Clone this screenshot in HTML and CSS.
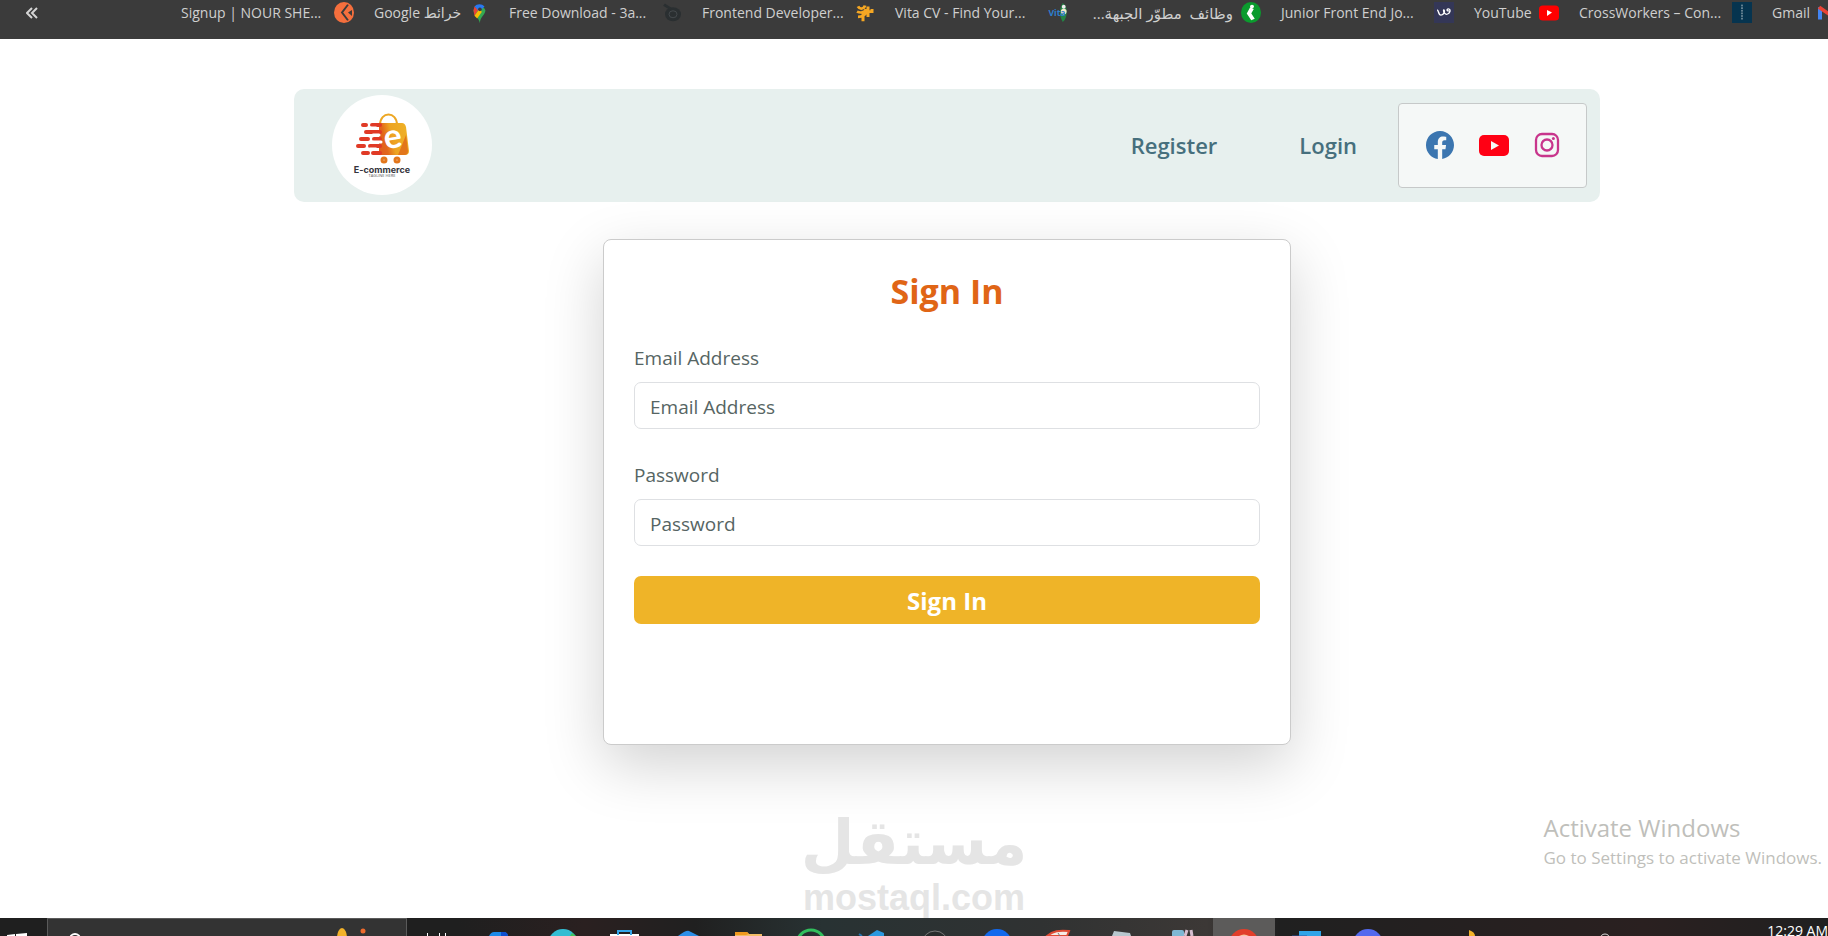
FILE: index.html
```html
<!DOCTYPE html>
<html lang="en">
<head>
    <meta charset="UTF-8">
    <meta name="viewport" content="width=device-width, initial-scale=1.0">
    <title>Sign In</title>
    <link rel="stylesheet" href="styles.css">
</head>
<body>

    <!-- Bookmarks -->
    <nav class="bookmarks" aria-label="Bookmarks">
        <button class="more" aria-label="More bookmarks">
            <svg width="12" height="12" viewBox="0 0 12 12"><path d="M6 1L1 6l5 5M11 1L6 6l5 5" fill="none" stroke="#d4d4d4" stroke-width="2"/></svg>
        </button>
        <a class="bookmark" href="#"><span>Signup | NOUR SHE...</span>
            <svg width="20" height="21" viewBox="0 0 20 24" preserveAspectRatio="none"><ellipse cx="10" cy="12" rx="10" ry="12" fill="#f56f3d"/><path d="M14 3L8 12l6 9" fill="none" stroke="#3b3b3b" stroke-width="2"/><path d="M18 9l-4 3 4 4z" fill="#3b3b3b"/></svg>
        </a>
        <a class="bookmark google" href="#"><span>Google خرائط</span>
            <svg width="20" height="22" viewBox="0 0 20 24"><path d="M4 9a7 7 0 0 1 13 0c0 5-6 7-6 14C10 17 4 14 4 9z" fill="#34a853"/><path d="M5 5a7 7 0 0 1 11 0l-6 6z" fill="#2879f3"/><path d="M4 9l1-4 4 4-4 6z" fill="#ea4335"/><path d="M5 15l6-8 2 4-5 7z" fill="#fbbc04"/><circle cx="11" cy="8" r="2" fill="#3b3b3b"/></svg>
        </a>
        <a class="bookmark" href="#"><span>Free Download - 3a...</span>
            <svg width="20" height="21" viewBox="0 0 20 24" preserveAspectRatio="none"><circle cx="11" cy="14" r="8" fill="#2a2f31"/><circle cx="11" cy="14" r="4" fill="none" stroke="#454b4e"/><path d="M2 3l7 5" stroke="#2a2f31" stroke-width="3"/></svg>
        </a>
        <a class="bookmark" href="#"><span>Frontend Developer...</span>
            <svg width="20" height="21" viewBox="0 0 20 24" preserveAspectRatio="none"><path d="M3 5c2 4 6 3 7-1M2 11c4 2 8 1 9-3M3 17c4 0 7-2 8-6M8 10v12M13 5v12M10 11h7V8" fill="none" stroke="#f5a723" stroke-width="3"/></svg>
        </a>
        <a class="bookmark" href="#"><span>Vita CV - Find Your...</span>
            <svg width="20" height="21" viewBox="0 1 20 22"><path d="M15 2c6 4 5 16 0 20-4-7-4-13 0-20z" fill="#248546"/><circle cx="16" cy="11" r="3" fill="#f3e9c9"/><circle cx="16" cy="6" r="2" fill="#eee"/><text x="0" y="16" class="vita">Vita</text></svg>
        </a>
        <a class="bookmark arabic" href="#"><span dir="rtl">وظائف&nbsp; مطوّر الجبهة...</span>
            <svg width="20" height="21" viewBox="0 0 20 24" preserveAspectRatio="none"><ellipse cx="10" cy="12" rx="10" ry="12" fill="#0b9b2e"/><circle cx="11" cy="5" r="2" fill="#fff"/><path d="M11 7l-3 6 4 7" fill="none" stroke="#fff" stroke-width="4"/></svg>
        </a>
        <a class="bookmark" href="#"><span>Junior Front End Jo...</span>
            <svg width="20" height="21" viewBox="0 0 20 24" preserveAspectRatio="none"><path d="M0 0h20v24H0z" fill="#343757"/><path d="M3 9c2 0 1 6 4 6s4-5 3-6 0 6 3 5 4-5 2-6-3 3 0 2" fill="none" stroke="#fff" stroke-width="1.5"/></svg>
        </a>
        <a class="bookmark youtube" href="#"><span>YouTube</span>
            <svg width="20" height="21" viewBox="0 0 20 24" preserveAspectRatio="none"><rect y="4" width="20" height="17" rx="4" fill="#f00"/><path d="M8 9l5 3-5 4z" fill="#fff"/></svg>
        </a>
        <a class="bookmark" href="#"><span>CrossWorkers – Con...</span>
            <svg width="20" height="21" viewBox="0 0 20 24" preserveAspectRatio="none"><path d="M0 0h20v24H0z" fill="#06344f"/><path d="M10 3v18" stroke="#cbd5da" stroke-dasharray="2 1"/></svg>
        </a>
        <a class="bookmark gmail" href="#"><span>Gmail</span>
            <svg width="20" height="21" viewBox="0 0 20 24" preserveAspectRatio="none"><path d="M2 20V6" stroke="#4285f4" stroke-width="4"/><path d="M1 6l9 7 9-7" fill="none" stroke="#ea4335" stroke-width="4"/><path d="M18 20V6" stroke="#34a853" stroke-width="4"/></svg>
        </a>
    </nav>

    <!-- Page -->
    <div class="page">
        <header class="navbar">
            <a class="logo" href="#" aria-label="E-commerce">
                <svg width="100" height="100" viewBox="0 0 100 100">
                    <defs>
                        <linearGradient id="bag" x1="0" y1="0.2" x2="1" y2="0">
                            <stop offset="0" stop-color="#e2561f"/>
                            <stop offset="0.3" stop-color="#e2661a"/>
                            <stop offset="0.5" stop-color="#eda321"/>
                            <stop offset="1" stop-color="#efb428"/>
                        </linearGradient>
                    </defs>
                    <circle cx="50" cy="50" r="50" fill="#fff"/>
                    <path d="M48 30c0-14 17-14 17 0" fill="none" stroke="#eda724" stroke-width="2"/>
                    <path d="M38 28h32q3 0 4 4l3 24q0 4-4 4H47V28z" fill="url(#bag)"/>
                    <path d="M74 40l2 16q0 4-4 4h-6z" fill="#e2761b"/>
                    <g stroke="#e03a26" stroke-width="4" stroke-linecap="round">
                        <path d="M31 30h3M40 30h8M34 37h14M29 44h7M42 44h6M26 51h6M38 51h10M31 58h5M41 58h7"/>
                    </g>
                    <path d="M38 33h6M41 40h6M41 47h8M38 54h6" stroke="#fff" stroke-width="3" stroke-linecap="round"/>
                    <text x="61" y="53" class="logo-letter" transform="rotate(-10 61 45)">e</text>
                    <g fill="#fff" stroke="#e2761b" stroke-width="3"><circle cx="52" cy="65" r="2"/><circle cx="65" cy="65" r="2"/></g>
                    <text x="50" y="78" class="logo-name">E-commerce</text>
                    <text x="50" y="82" class="logo-tag">TAGLINE HERE</text>
                </svg>
            </a>
            <nav class="links">
                <a href="#">Register</a>
                <a href="#">Login</a>
            </nav>
            <div class="social">
                <a href="#" aria-label="Facebook"><svg width="28" height="28" viewBox="0 0 16 16" fill="#3b76b0"><path d="M16 8.049c0-4.446-3.582-8.05-8-8.05C3.58 0-.002 3.603-.002 8.05c0 4.017 2.926 7.347 6.75 7.951v-5.625h-2.03V8.05H6.75V6.275c0-2.017 1.195-3.131 3.022-3.131.876 0 1.791.157 1.791.157v1.98h-1.009c-.993 0-1.303.621-1.303 1.258v1.51h2.218l-.354 2.326H9.25V16c3.824-.604 6.75-3.934 6.75-7.951"/></svg></a>
                <a href="#" aria-label="YouTube"><svg width="30" height="22" viewBox="0 0 30 22"><rect y="1" width="30" height="21" rx="5" fill="#ff0014"/><path d="M12 7l8 4.500-8 4.500z" fill="#f5f8f7"/></svg></a>
                <a href="#" aria-label="Instagram"><svg width="26" height="26" viewBox="0 0 26 26"><rect x="2" y="2" width="22" height="22" rx="6" fill="none" stroke="#c8358c" stroke-width="2.300"/><circle cx="13" cy="13" r="5.500" fill="none" stroke="#c8358c" stroke-width="2.300"/><circle cx="19.400" cy="6.600" r="1.500" fill="#c8358c"/></svg></a>
            </div>
        </header>

        <main class="card">
            <h1>Sign In</h1>
            <form>
                <label for="email">Email Address</label>
                <input type="email" id="email" placeholder="Email Address">
                <label for="password">Password</label>
                <input type="password" id="password" placeholder="Password">
                <button type="submit" class="submit">Sign In</button>
            </form>
        </main>
    </div>

    <div class="watermark">
        <span class="watermark-ar" lang="ar">مستقل</span>
        <span>mostaql.com</span>
    </div>

    <div class="activate">
        <span class="activate-title">Activate Windows</span>
        <span>Go to Settings to activate Windows.</span>
    </div>

    <!-- Taskbar -->
    <footer class="taskbar">
        <button class="start" aria-label="Start"><svg width="47" height="18" viewBox="0 0 47 18"><path d="M7 17l8-1v2H7zM16 16l11-1v3H16z" fill="#fff"/></svg></button>
        <div class="search">
            <svg width="24" height="18" viewBox="0 0 24 18"><circle cx="12" cy="21" r="5" fill="none" stroke="#fff" stroke-width="2"/></svg>
            <svg width="40" height="18" viewBox="0 0 40 18"><ellipse cx="10" cy="20" rx="5" ry="10" fill="#f3b229"/><circle cx="31" cy="13" r="2.500" fill="#ee6a2c"/></svg>
        </div>
        <button class="app" aria-label="Task view"><svg width="36" height="18" viewBox="0 0 36 18"><path d="M7.500 15v3M19.500 15v3M25.500 15v3" stroke="#fff"/></svg></button>
        <button class="app" aria-label="Copilot"><svg width="36" height="18" viewBox="0 0 36 18"><path d="M7 18q2-4 5-4h10q3 0 4 4z" fill="#1d8ae8"/><path d="M19 14h4q3 1 3 4h-7z" fill="#0f4fd0"/></svg></button>
        <button class="app" aria-label="Edge"><svg width="36" height="18" viewBox="0 0 36 18"><circle cx="19" cy="26" r="15" fill="#33bdd2"/><path d="M28 15l4 3h-6z" fill="#3fc75a"/></svg></button>
        <button class="app" aria-label="Store"><svg width="36" height="18" viewBox="0 0 36 18"><path d="M4 16h29v2H4z" fill="#fff"/><path d="M12 17v-4h13v4" fill="none" stroke="#35a6ea" stroke-width="2"/></svg></button>
        <button class="app" aria-label="Mail"><svg width="36" height="18" viewBox="0 0 36 18"><path d="M10 18q8-6 11-5l10 5z" fill="#2d8fe8"/></svg></button>
        <button class="app" aria-label="Files"><svg width="36" height="18" viewBox="0 0 36 18"><path d="M5 14h12l2 2h13v2H5z" fill="#f2bd67"/><path d="M5 14h12l2 2-3 1H5z" fill="#ef991d"/></svg></button>
        <button class="app" aria-label="WhatsApp"><svg width="36" height="18" viewBox="0 0 36 18"><circle cx="19" cy="26" r="14" fill="none" stroke="#31bf5d" stroke-width="3"/></svg></button>
        <button class="app" aria-label="Code"><svg width="36" height="18" viewBox="0 0 36 18"><path d="M14 18l9-6 7 3v3z" fill="#2b98df"/><path d="M5 16l3 2" stroke="#2472ad" stroke-width="2"/></svg></button>
        <button class="app" aria-label="Browser"><svg width="36" height="18" viewBox="0 0 36 18"><circle cx="19" cy="26" r="13" fill="#292c2c" stroke="#777"/></svg></button>
        <button class="app" aria-label="Messages"><svg width="36" height="18" viewBox="0 0 36 18"><circle cx="19" cy="26" r="15" fill="#1269ed"/></svg></button>
        <button class="app" aria-label="Clock"><svg width="36" height="18" viewBox="0 0 36 18"><path d="M7 18c6-5 12-6 22-5l-2 5z" fill="#f5ebe5" stroke="#df4c35" stroke-width="2"/><path d="M18 15l2 3" stroke="#777"/></svg></button>
        <button class="app" aria-label="Notes"><svg width="36" height="18" viewBox="0 0 36 18"><path d="M12 13l16 2 1 3H10z" fill="#b8c7ce"/></svg></button>
        <button class="app" aria-label="Tools"><svg width="36" height="18" viewBox="0 0 36 18"><rect x="8" y="12" width="12" height="8" rx="2" fill="#7fb8d4"/><path d="M23 12l-2 6M27 12l1 6" stroke="#d7bed0" stroke-width="3"/></svg></button>
        <button class="app active" aria-label="Chrome"><svg width="36" height="18" viewBox="0 0 36 18"><circle cx="18" cy="26" r="15" fill="#e23e2a"/><path d="M13 18q5-3 10 0z" fill="#f5c7a2"/></svg></button>
        <button class="app" aria-label="Photos"><svg width="36" height="18" viewBox="0 0 36 18"><path d="M11 13h22v5H11z" fill="#2fa4e8"/><path d="M4 18h15" stroke="#3156a2" stroke-width="1"/></svg></button>
        <button class="app" aria-label="Discord"><svg width="36" height="18" viewBox="0 0 36 18"><circle cx="18" cy="26" r="15" fill="#5369ee"/></svg></button>
        <div class="tray">
            <svg width="18" height="18" viewBox="0 0 18 18"><path d="M8 12q6 2 6 6H8z" fill="#f3b229"/></svg>
            <svg width="18" height="18" viewBox="0 0 18 18"><circle cx="9" cy="21" r="5" fill="none" stroke="#ddd"/></svg>
            <span class="time">12:29 AM</span>
        </div>
    </footer>

</body>
</html>
```

FILE: styles.css
```css
* {
    box-sizing: border-box;
}
body {
    font-family: "Open Sans", "Noto Sans", "DejaVu Sans", sans-serif;
    margin: 0;
    height: 100vh;
    display: flex;
    flex-direction: column;
    overflow: hidden;
    background: white;
    color: #566563;
    position: relative;
}
a {
    text-decoration: none;
}
button {
    border: none;
    padding: 0;
    background: none;
    font-family: inherit;
    cursor: pointer;
}
svg {
    display: block;
    flex-shrink: 0;
}

/* Bookmarks */
.bookmarks {
    flex-shrink: 0;
    display: flex;
    gap: 20px;
    height: 39px;
    padding-left: 26px;
    background: #3b3b3b;
    overflow: hidden;
}
.more {
    flex-shrink: 0;
    width: 135px;
    height: 26px;
}
.bookmark {
    flex-shrink: 0;
    display: flex;
    justify-content: space-between;
    align-items: center;
    width: 173px;
    height: 25px;
    font-size: 14px;
    color: #cfcfcf;
    white-space: nowrap;
}
.google {
    width: 115px;
}
.youtube {
    width: 85px;
}
.gmail {
    width: 66px;
}
.arabic {
    justify-content: flex-end;
    gap: 8px;
    font-size: 15px;
}
.vita {
    font-size: 9px;
    font-weight: bold;
    fill: #2d7fd0;
}

/* Navbar */
.page {
    flex: 1;
    min-height: 0;
    padding: 50px 0 0 66px;
}
.navbar {
    display: flex;
    align-items: center;
    max-width: 1306px;
    margin: 0 auto 37px;
    padding: 6px 13px 7px 38px;
    border-radius: 10px;
    background: #e7f0ee;
}
.links {
    display: flex;
    gap: 82px;
    margin-left: auto;
    margin-right: 41px;
}
.links a {
    font-size: 22px;
    font-weight: 600;
    color: #466f7d;
}
.social {
    display: flex;
    align-items: center;
    justify-content: center;
    gap: 25px;
    width: 189px;
    height: 85px;
    border: 1px solid #c6c9c9;
    border-radius: 4px;
    background: #f5f8f7;
}
.logo-letter {
    font-family: Lato, sans-serif;
    font-size: 34px;
    font-weight: bold;
    text-anchor: middle;
    fill: white;
}
.logo-name {
    font-family: Inter, sans-serif;
    font-size: 9px;
    font-weight: bold;
    text-anchor: middle;
    fill: #34343c;
}
.logo-tag {
    font-size: 4px;
    text-anchor: middle;
    fill: #555;
}

/* Sign in card */
.card {
    max-width: 688px;
    min-height: 506px;
    margin: 0 auto;
    padding: 28px 30px;
    border: 1px solid #cbcbcb;
    border-radius: 8px;
    background: white;
    box-shadow: 0 20px 60px rgba(0, 0, 0, 0.18);
}
.card h1 {
    margin: 0 0 30px;
    font-size: 34px;
    line-height: 46px;
    font-weight: bold;
    text-align: center;
    color: #e06516;
}
.card label {
    display: block;
    margin-bottom: 10px;
    font-size: 19px;
    line-height: 28px;
}
.card input {
    display: block;
    width: 100%;
    height: 47px;
    margin-bottom: 32px;
    padding: 2px 15px 0;
    border: 1px solid #dee0e3;
    border-radius: 7px;
    font-family: inherit;
    font-size: 19px;
    color: #566563;
}
.card input::placeholder {
    color: #566563;
    opacity: 1;
}
.card #password {
    margin-bottom: 30px;
}
.submit {
    display: block;
    width: 100%;
    height: 48px;
    border-radius: 7px;
    background: #efb428;
    font-size: 24px;
    font-weight: bold;
    color: white;
}

/* Overlays */
.watermark {
    position: absolute;
    left: 0;
    right: 0;
    bottom: 18px;
    display: flex;
    flex-direction: column;
    align-items: center;
    font-family: "Liberation Sans", sans-serif;
    font-size: 36px;
    line-height: 41px;
    font-weight: bold;
    color: #e5e5e5;
    pointer-events: none;
}
.watermark-ar {
    font-family: "DejaVu Sans", sans-serif;
    font-size: 62px;
    line-height: 68px;
}
.activate {
    position: absolute;
    right: 6px;
    bottom: 66px;
    display: flex;
    flex-direction: column;
    font-size: 17px;
    line-height: 24px;
    color: #bfbfbb;
    pointer-events: none;
}
.activate-title {
    font-size: 24px;
    line-height: 36px;
}

/* Taskbar */
.taskbar {
    position: relative;
    flex-shrink: 0;
    display: flex;
    height: 18px;
    background: linear-gradient(90deg, #1f1f1f 25%, #2a2020 32%, #202020 38%, #283233 45%, #303232 57%, #3c3836 66%, #202020 70%, #2a2020 90%, #202020);
    overflow: hidden;
}
.search {
    flex-shrink: 0;
    display: flex;
    justify-content: space-between;
    width: 360px;
    padding: 0 34px 0 15px;
    border: 1px solid #5a5a5a;
    border-bottom: none;
    background: #333;
}
.search svg {
    margin-top: -1px;
}
.app {
    flex-shrink: 0;
    display: flex;
    justify-content: center;
    width: 62px;
    height: 18px;
}
.app.active {
    background: #5c5b5a;
}
.tray {
    flex: 1;
    display: flex;
    gap: 117px;
    padding-left: 62px;
}
.time {
    margin-left: auto;
    font-size: 14px;
    line-height: 26px;
    color: white;
    white-space: nowrap;
}
```
